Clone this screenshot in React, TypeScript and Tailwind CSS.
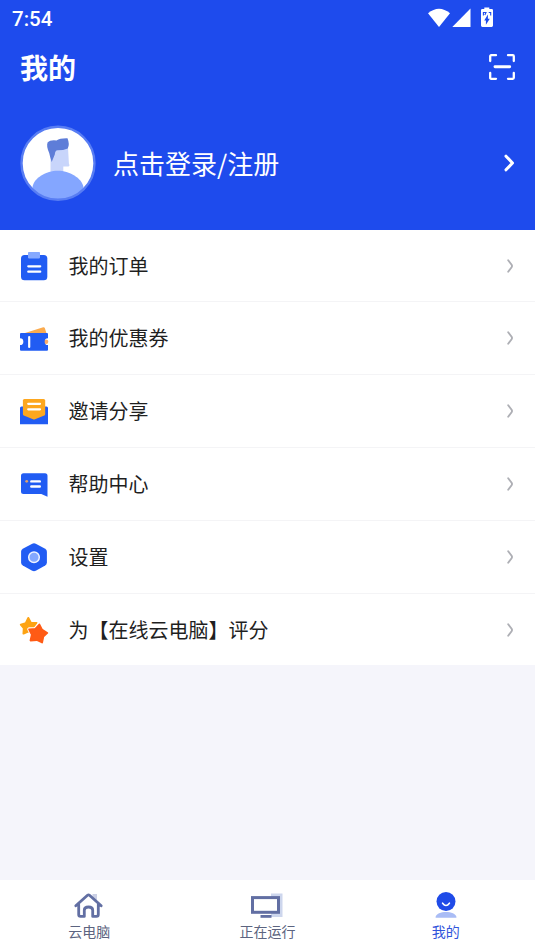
import type { ReactNode } from "react";

const OrderIcon = () => (
  <svg width="30" height="30" viewBox="0 0 30 30">
    <rect x="2" y="4" width="26.3" height="25.2" rx="3.5" fill="#215cf3" />
    <rect x="9" y="1" width="12" height="6.4" rx="0.8" fill="#86a9ff" />
    <path d="M9.3 15.3H21.2M9.3 20.7H21.2" stroke="#fff" strokeWidth="2.3" strokeLinecap="round" />
  </svg>
);

const CouponIcon = () => (
  <svg width="30" height="30" viewBox="0 0 30 30">
    <path d="M6 10 24.2 4.2Q25.4 4 25.8 5L27.5 10.5Z" fill="#fbab4e" />
    <circle cx="27" cy="18.7" r="2.3" fill="#fbab68" />
    <path d="M2 10H28Q29 10 29 11V15.3A3.3 3.3 0 0 0 29 22V26.8Q29 27.8 28 27.8H2Q1 27.8 1 26.8V22A3.3 3.3 0 0 0 1 15.3V11Q1 10 2 10Z" fill="#215cf3" />
    <path d="M10.2 14V24" stroke="#fff" strokeWidth="2.2" strokeLinecap="round" />
  </svg>
);

const InviteIcon = () => (
  <svg width="30" height="30" viewBox="0 0 30 30">
    <path d="M2.5 10.5H27.5Q29 10.5 29 12V28.2H1V12Q1 10.5 2.5 10.5Z" fill="#215cf3" />
    <path d="M5.4 3H24.6Q26.2 3 26.2 4.6V18Q26.2 19 25.3 19.5L16 23.3Q15 23.7 14 23.3L4.8 19.5Q3.9 19 3.9 18V4.6Q3.9 3 5.4 3Z" fill="#fda71f" />
    <path d="M9.2 7.8H21M9.2 13.3H21" stroke="#fff" strokeWidth="2.2" strokeLinecap="round" />
  </svg>
);

const HelpIcon = () => (
  <svg width="30" height="30" viewBox="0 0 30 30">
    <path d="M4.5 4.3H26Q28.5 4.3 28.5 6.8V27.8L22.3 25H4.5Q2 25 2 22.5V6.8Q2 4.3 4.5 4.3Z" fill="#215cf3" />
    <circle cx="7.7" cy="12.3" r="1.4" fill="#dda16d" />
    <path d="M12.3 12.4H20.8M12.3 17.5H20.8" stroke="#fff" strokeWidth="2.4" strokeLinecap="round" />
  </svg>
);

const SettingsIcon = () => (
  <svg width="30" height="30" viewBox="0 0 30 30">
    <path d="M13.2 1.7Q15 0.8 16.8 1.7L26.2 6.7Q27.9 7.7 27.9 9.7V20.5Q27.9 22.5 26.2 23.5L16.8 28.7Q15 29.6 13.2 28.7L3.8 23.5Q2.1 22.5 2.1 20.5V9.7Q2.1 7.7 3.8 6.7Z" fill="#215cf3" />
    <circle cx="15" cy="15.2" r="5.3" fill="#84a8ff" stroke="#eef3ff" strokeWidth="1.5" />
  </svg>
);

const StarsIcon = () => (
  <svg width="30" height="30" viewBox="0 0 30 30">
    <path d="M9.3 3 11.8 7.7 17.5 8 14 13 15 18.5 9.5 16.3 4.5 18.5 4.8 13.2 1.8 9.7 6.8 8.3Z" fill="#fda313" stroke="#fda313" strokeWidth="2" strokeLinejoin="round" />
    <path d="M20.1 9.5 22.7 15.1 28.3 17.9 24.1 21.5 23.1 27.7 17.8 24.6 11.5 25.5 13.1 19.6 10.3 14.3 16.3 14Z" fill="#ff5b15" stroke="#fff" strokeWidth="4" strokeLinejoin="round" />
    <path d="M20.3 9.5 22.9 14.5 28.3 17.9 24.3 21.7 23.1 27.5 17.8 25 11.5 25.5 12.8 19.6 10.1 14.3 16.3 13.8Z" fill="#ff5b15" stroke="#ff5b15" strokeWidth="1.8" strokeLinejoin="round" />
  </svg>
);

const rows: { label: string; icon: ReactNode; height: string }[] = [
  { label: "我的订单", icon: <OrderIcon />, height: "h-[72px] border-b" },
  { label: "我的优惠券", icon: <CouponIcon />, height: "h-[73px] border-b" },
  { label: "邀请分享", icon: <InviteIcon />, height: "h-[73px] border-b" },
  { label: "帮助中心", icon: <HelpIcon />, height: "h-[73px] border-b" },
  { label: "设置", icon: <SettingsIcon />, height: "h-[73px] border-b" },
  { label: "为【在线云电脑】评分", icon: <StarsIcon />, height: "h-[71px]" },
];

const HomeIcon = () => (
  <svg width="34" height="28" viewBox="0 0 34 28">
    <path d="M20.5 2H25V10L20.5 6Z" fill="#cbd0e5" />
    <path d="M3.8 13.8 15.5 3.3Q16.5 2.4 17.5 3.3L29.2 13.8M6.7 12.5V22.6Q6.7 24.4 8.5 24.4H12.3V18.2Q12.3 15 16.5 15T20.7 18.2V24.4H24.5Q26.3 24.4 26.3 22.6V12.5" fill="none" stroke="#626fa3" strokeWidth="2.8" strokeLinecap="round" strokeLinejoin="round" />
  </svg>
);

const MonitorIcon = () => (
  <svg width="34" height="28" viewBox="0 0 34 28">
    <rect x="21" y="1.5" width="11.5" height="23.5" fill="#cdd6ed" />
    <rect x="2.5" y="5.6" width="26" height="14.7" fill="#fff" stroke="#626fa3" strokeWidth="3" />
    <path d="M10.5 24.4H21.5" stroke="#626fa3" strokeWidth="2.8" />
  </svg>
);

const ProfileIcon = () => (
  <svg width="34" height="28" viewBox="0 0 34 28">
    <path d="M6.5 25.2C7.5 18.3 26.5 18.3 27.5 25.2Q27.4 25.7 26.8 25.7H7.2Q6.6 25.7 6.5 25.2Z" fill="#a9bcf5" />
    <circle cx="17" cy="9.5" r="9.5" fill="#1f4be8" />
    <path d="M13.6 11.2Q17 15.8 20.4 11.2" fill="none" stroke="#fff" strokeWidth="1.6" strokeLinecap="round" />
  </svg>
);

const tabs = [
  { label: "云电脑", icon: <HomeIcon />, color: "text-[#5c6480]" },
  { label: "正在运行", icon: <MonitorIcon />, color: "text-[#5c6480]" },
  { label: "我的", icon: <ProfileIcon />, color: "text-[#3155db]" },
];

export default function App() {
  return (
    <div className="flex h-[951px] w-[535px] flex-col overflow-hidden bg-[#f5f5fb] font-['Noto_Sans_CJK_SC',sans-serif]">
      <header className="h-[230px] shrink-0 bg-[#1e4bed] text-white">
        <div className="flex h-[37px] items-center justify-between pl-3 pr-[40px]">
          <span className="pt-0.5 font-['Roboto',sans-serif] text-[20.5px] font-medium">7:54</span>
          <svg width="68" height="24" viewBox="0 0 68 24" className="mb-px">
            <path d="M1 7.2Q12 -1.8 23 7.2L12 21Z" fill="#fff" />
            <path d="M43.5 2.5V21H25.3Z" fill="#fff" />
            <path d="M57.3 1.4H62.3V3H64.7Q66 3 66 4.3V19.6Q66 21 64.6 21H55.4Q54 21 54 19.6V4.3Q54 3 55.3 3H57.3Z" fill="#fff" />
            <path d="M60.9 8.5V12.7H62.8L58.9 18.8V14.5H57.2Z" fill="#1e4bed" />
            <path d="M56.4 9.5V6.5H59L57.8 9M61.7 6.5H63.7V9.5" fill="none" stroke="#1e4bed" strokeWidth="1.1" />
          </svg>
        </div>
        <div className="flex h-[59px] items-center justify-between pl-5 pr-[19px]">
          <h1 className="text-[28px] font-bold leading-none">我的</h1>
          <svg width="28" height="28" viewBox="0 0 28 28" fill="none" stroke="#fff" strokeWidth="2.3" strokeLinecap="round" strokeLinejoin="round">
            <path d="M2.2 8V3.2Q2.2 2.2 3.2 2.2H8M20 2.2H24.8Q25.8 2.2 25.8 3.2V8M25.8 20V24.8Q25.8 25.8 24.8 25.8H20M8 25.8H3.2Q2.2 25.8 2.2 24.8V20" />
            <path d="M7 13.8H21.7" strokeWidth="2.9" />
          </svg>
        </div>
        <div className="flex h-[134px] items-center pl-5 pr-[19px]">
          <svg width="76" height="76" viewBox="0 0 76 76">
            <circle cx="38" cy="38.5" r="36.3" fill="#fff" />
            <clipPath id="avatarClip"><circle cx="38" cy="38.5" r="36" /></clipPath>
            <g clipPath="url(#avatarClip)">
              <path d="M31 25 48 22 48.9 38.5Q50.2 41.3 48.2 41.6H43.3V50H30.5V36Z" fill="#c8d5fb" />
              <path d="M47.5 13.2Q50 19.5 47.7 23.4Q43.5 25.3 37.5 25.3Q35 25.5 34.8 29.5L31.7 37Q30 32 29.2 28Q26 20.5 27.7 17.2Q30 14.7 36.5 15.4Q40 13 47.5 13.2Z" fill="#5e7dd8" />
              <path d="M12.5 76V62C14 53 26 45.8 37.8 45.8S61.5 53 63.5 62V76Z" fill="#84a6ff" />
            </g>
            <circle cx="38" cy="38.3" r="36.5" fill="none" stroke="#587df3" strokeWidth="2.4" />
          </svg>
          <span className="ml-[17px] flex-1 text-[26px] leading-none">点击登录/注册</span>
          <svg width="14" height="20" viewBox="0 0 14 20">
            <path d="M4 3.2 10.5 10 4 16.8" fill="none" stroke="#fff" strokeWidth="3" strokeLinecap="round" strokeLinejoin="round" />
          </svg>
        </div>
      </header>

      <main className="bg-white">
        {rows.map((row) => (
          <div key={row.label} className={`flex items-center border-[#f4f4f6] pl-[19px] pr-5 ${row.height}`}>
            {row.icon}
            <span className="ml-[19.5px] flex-1 text-[20px] leading-none text-[#1f1f1f]">{row.label}</span>
            <svg width="10" height="18" viewBox="0 0 10 18">
              <path d="M3.2 3.2 6.6 7.8Q7.4 9 6.6 10.2L3.2 14.8" fill="none" stroke="#aeafb5" strokeWidth="1.9" strokeLinecap="round" strokeLinejoin="round" />
            </svg>
          </div>
        ))}
      </main>

      <nav className="mt-auto grid h-[71px] grid-cols-3 bg-white pt-3">
        {tabs.map((tab) => (
          <button key={tab.label} className={`flex flex-col items-center ${tab.color}`}>
            {tab.icon}
            <span className="mt-1 text-[14px] leading-none">{tab.label}</span>
          </button>
        ))}
      </nav>
    </div>
  );
}
